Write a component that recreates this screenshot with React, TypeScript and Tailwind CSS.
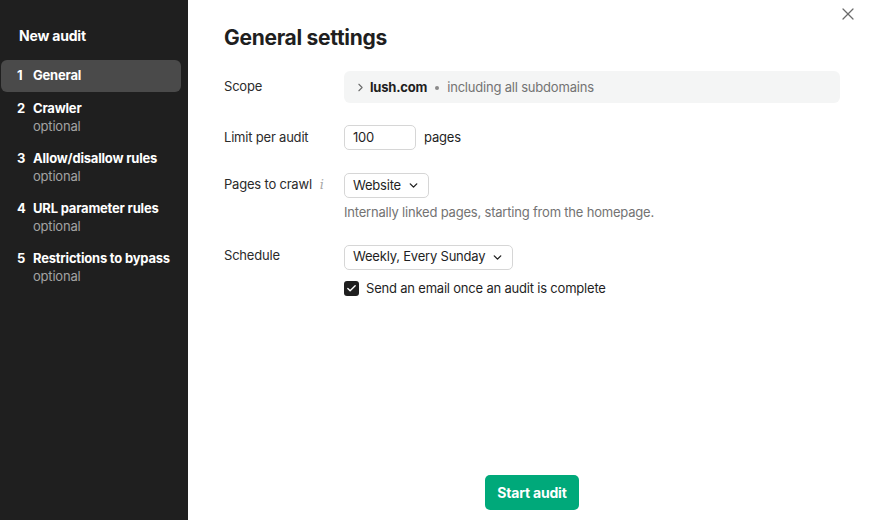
import { Check, ChevronDown, ChevronRight, X } from 'lucide-react';

const steps = [
  { n: 1, label: 'General', active: true },
  { n: 2, label: 'Crawler' },
  { n: 3, label: 'Allow/disallow rules' },
  { n: 4, label: 'URL parameter rules' },
  { n: 5, label: 'Restrictions to bypass' },
];

function Sidebar() {
  return (
    <aside className="w-[188px] shrink-0 bg-[#1f1f1f] text-white pt-[26px] tracking-[-0.2px]">
      <h2 className="px-[19px] text-[14px] font-bold leading-[20px]">New audit</h2>
      <ul className="mt-[14px] flex flex-col">
        {steps.map((s, i) =>
          s.active ? (
            <li key={s.n} className="mx-[1px] mr-[7px] flex h-[32px] items-center rounded-[6px] bg-[#4a4a4a] pl-[16px] text-[13px] font-bold">
              <span className="w-[16px]">{s.n}</span>
              <span>{s.label}</span>
            </li>
          ) : (
            <li key={s.n} className={`${i === 1 ? 'mt-[7px]' : 'mt-[14px]'} flex pl-[17px] text-[13px] leading-[18px]`}>
              <span className="w-[16px] font-bold">{s.n}</span>
              <div className="flex flex-col">
                <span className="font-bold">{s.label}</span>
                <span className="text-[#a3a3a3]">optional</span>
              </div>
            </li>
          )
        )}
      </ul>
    </aside>
  );
}

function Row({ label, children, info }: { label: string; children: React.ReactNode; info?: boolean }) {
  return (
    <div className="flex items-start">
      <div className="flex w-[120px] shrink-0 items-center text-[13px] leading-[25px] text-[#2b2b2b]">
        {label}
        {info && <span className="ml-[8px] font-['DejaVu_Serif',serif] italic text-[13px] text-[#a8a8a8]">i</span>}
      </div>
      <div className="flex-1">{children}</div>
    </div>
  );
}

export default function App() {
  return (
    <div className="flex h-[520px] w-[869px] bg-white font-['Inter',sans-serif] text-[#1f1f1f]">
      <Sidebar />
      <main className="relative flex flex-1 flex-col pl-[36px] pr-[29px] tracking-[-0.2px]">
        <button className="absolute right-[11px] top-[4px] text-[#6b6b6b]">
          <X size={20} strokeWidth={1.5} />
        </button>
        <h1 className="mt-[24px] text-[21px] font-bold leading-[28px] tracking-[-0.3px]">General settings</h1>

        <div className="mt-[19px] flex flex-col">
          <div className="flex items-center">
            <div className="w-[120px] text-[13px] text-[#2b2b2b]">Scope</div>
            <div className="flex h-[32px] flex-1 items-center rounded-[6px] bg-[#f4f5f5] pl-[10px] pt-[1px] text-[13px]">
              <ChevronRight size={13} strokeWidth={2} className="text-[#6b6b6b]" />
              <span className="ml-[3px] font-bold text-[#1f1f1f]">lush.com</span>
              <span className="mx-[8px] h-[4px] w-[4px] rounded-full bg-[#8a8a8a]" />
              <span className="text-[#737373]">including all subdomains</span>
            </div>
          </div>

          <div className="mt-[22px]">
            <Row label="Limit per audit">
              <div className="flex items-center gap-[8px]">
                <div className="flex h-[25px] w-[72px] items-center rounded-[5px] border border-[#d6d6d6] pl-[8px] text-[13px]">100</div>
                <span className="text-[13px]">pages</span>
              </div>
            </Row>
          </div>

          <div className="mt-[22px]">
            <Row label="Pages to crawl" info>
              <div className="inline-flex h-[25px] items-center gap-[6px] rounded-[5px] border border-[#d6d6d6] px-[8px] text-[13px]">
                Website
                <ChevronDown size={13} strokeWidth={2.5} />
              </div>
              <p className="mt-[5px] text-[13px] leading-[19px] text-[#737373]">Internally linked pages, starting from the homepage.</p>
            </Row>
          </div>

          <div className="mt-[21px]">
            <Row label="Schedule">
              <div className="inline-flex h-[25px] items-center gap-[6px] rounded-[5px] border border-[#d6d6d6] px-[8px] text-[13px]">
                Weekly, Every Sunday
                <ChevronDown size={13} strokeWidth={2.5} />
              </div>
              <label className="mt-[9px] flex items-center gap-[7px] text-[13px]">
                <span className="flex h-[15px] w-[15px] items-center justify-center rounded-[3px] bg-[#1f1f1f] text-white">
                  <Check size={11} strokeWidth={3} />
                </span>
                Send an email once an audit is complete
              </label>
            </Row>
          </div>
        </div>

        <div className="mt-auto mb-[10px] flex justify-center">
          <button className="h-[35px] rounded-[5px] bg-[#00a97a] px-[12px] text-[14px] font-bold text-white">Start audit</button>
        </div>
      </main>
    </div>
  );
}
